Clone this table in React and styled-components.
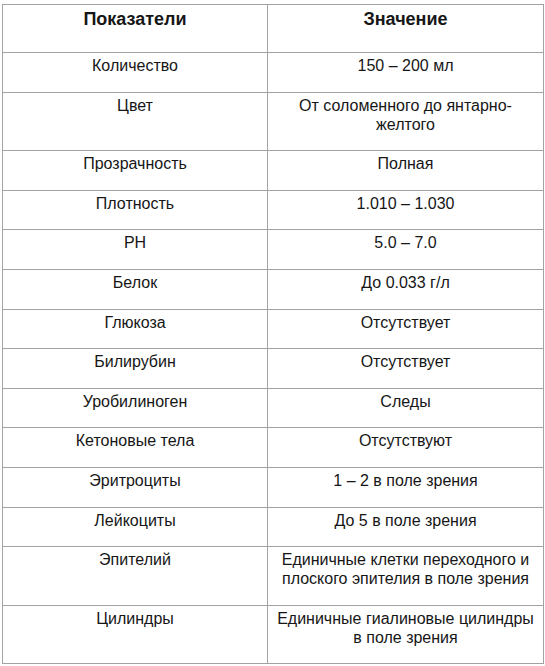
import React from 'react';
import styled, { createGlobalStyle } from 'styled-components';

const GlobalStyle = createGlobalStyle`
  body {
    margin: 0;
    background: #ffffff;
  }
`;

const Page = styled.div`
  padding: 4px 0 0 2px;
  font-family: "Liberation Sans", Arial, sans-serif;
  color: #161616;
`;

const Table = styled.table`
  width: 541px;
  border-collapse: collapse;
  table-layout: fixed;
`;

const Col = styled.col`
  width: ${(p) => p.$width}px;
`;

const HeadCell = styled.th`
  border: 1px solid #a3a3a3;
  padding: 3px 5px 22px;
  font-size: 18px;
  line-height: 22px;
  font-weight: bold;
  text-align: center;
  vertical-align: top;
`;

const Cell = styled.td`
  border: 1px solid #a3a3a3;
  padding: 3px 5px 16.6px;
  font-size: 16px;
  line-height: 19px;
  text-align: center;
  vertical-align: top;
`;

const rows = [
  ['Количество', '150 – 200 мл'],
  ['Цвет', 'От соломенного до янтарно-желтого'],
  ['Прозрачность', 'Полная'],
  ['Плотность', '1.010 – 1.030'],
  ['PH', '5.0 – 7.0'],
  ['Белок', 'До 0.033 г/л'],
  ['Глюкоза', 'Отсутствует'],
  ['Билирубин', 'Отсутствует'],
  ['Уробилиноген', 'Следы'],
  ['Кетоновые тела', 'Отсутствуют'],
  ['Эритроциты', '1 – 2 в поле зрения'],
  ['Лейкоциты', 'До 5 в поле зрения'],
  ['Эпителий', 'Единичные клетки переходного и плоского эпителия в поле зрения'],
  ['Цилиндры', 'Единичные гиалиновые цилиндры в поле зрения'],
];

const App = () => (
  <Page>
    <GlobalStyle />
    <Table>
      <colgroup>
        <Col $width={265} />
        <Col $width={276} />
      </colgroup>
      <thead>
        <tr>
          <HeadCell>Показатели</HeadCell>
          <HeadCell>Значение</HeadCell>
        </tr>
      </thead>
      <tbody>
        {rows.map(([name, value]) => (
          <tr key={name}>
            <Cell>{name}</Cell>
            <Cell>{value}</Cell>
          </tr>
        ))}
      </tbody>
    </Table>
  </Page>
);

export default App;
